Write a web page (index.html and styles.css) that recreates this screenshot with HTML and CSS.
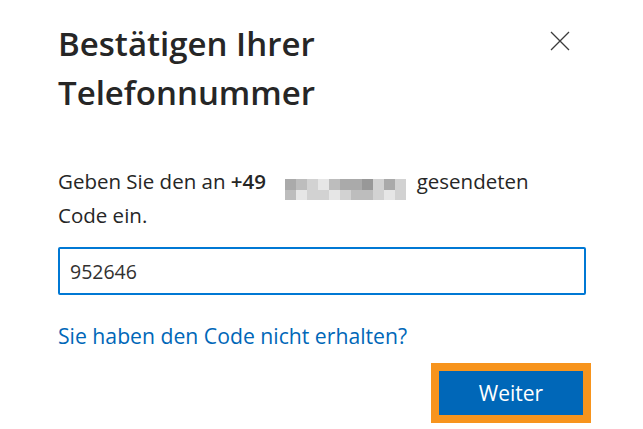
FILE: index.html
```html
<!DOCTYPE html>
<html lang="de">
<head>
<meta charset="utf-8">
<title>Bestätigen Ihrer Telefonnummer</title>
<link rel="stylesheet" href="styles.css">
</head>
<body>
<div class="dialog">
  <div class="header">
    <h1 class="title">Bestätigen Ihrer Telefonnummer</h1>
    <button class="close" aria-label="Schließen">
      <svg width="20" height="20" viewBox="0 0 20 20"><path d="M1 1 L19 19 M19 1 L1 19" stroke="#3b3b3b" stroke-width="1.3" fill="none"/></svg>
    </button>
  </div>
  <p class="desc">Geben Sie den an <b>+49</b> <span class="blur"><i class="a"></i><i class="b"></i><i class="c"></i><i class="w"></i><i class="b"></i><i class="a"></i><i class="a"></i><i class="d"></i><i class="c"></i><i class="a"></i><i class="c"></i><i class="b"></i><i class="w"></i><i class="c"></i><i class="c"></i><i class="w"></i><i class="c"></i><i class="b"></i><i class="b"></i><i class="c"></i><i class="w"></i><i class="c"></i></span> gesendeten Code ein.</p>
  <div class="field"><input class="input" type="text" value="952646"></div>
  <a class="link" href="#">Sie haben den Code nicht erhalten?</a>
  <div class="actions">
    <button class="primary">Weiter</button>
  </div>
</div>
</body>
</html>
```
FILE: styles.css
```css
html, body {
  margin: 0;
  padding: 0;
  background: #fff;
}
body {
  font-family: "Open Sans", "Noto Sans", sans-serif;
  color: #1b1b1b;
}
.dialog {
  width: 643px;
  height: 429px;
  box-sizing: border-box;
  padding: 19px 52px 0 58px;
  display: flex;
  flex-direction: column;
}
.header {
  display: flex;
  justify-content: space-between;
  align-items: flex-start;
}
.title {
  margin: 0;
  font-size: 33px;
  line-height: 49px;
  font-weight: 600;
  color: #262626;
  width: 330px;
}
.close {
  border: 0;
  background: none;
  padding: 0;
  margin: 12px 21px 0 0;
  width: 20px;
  height: 20px;
  display: flex;
}
.desc {
  margin: 49px 0 0;
  font-size: 20.5px;
  line-height: 30px;
  color: #262626;
  width: 500px;
}
.desc b {
  font-weight: 600;
}
.blur {
  display: inline-grid;
  grid-template-columns: repeat(11, 11px);
  grid-template-rows: 11px 10px;
  width: 121px;
  margin: 0 5px 0 14px;
  vertical-align: -1px;
}
.blur i { display: block; }
.blur .a { background: #aaaaaa; }
.blur .b { background: #bdbdbd; }
.blur .c { background: #d2d2d2; }
.blur .d { background: #989898; }
.blur .w { background: #e6e6e6; }
.field {
  margin-top: 17px;
}
.input {
  width: 528px;
  height: 48px;
  box-sizing: border-box;
  border: 2px solid #0078d4;
  border-radius: 2px;
  padding: 0 10px;
  font-family: "Open Sans", "Noto Sans", sans-serif;
  font-size: 19.5px;
  color: #323130;
  outline: none;
  display: block;
}
.link {
  margin-top: 26px;
  font-size: 21.2px;
  line-height: 30px;
  color: #0067b8;
  text-decoration: none;
  align-self: flex-start;
}
.actions {
  display: flex;
  justify-content: flex-end;
  margin-top: 20px;
}
.primary {
  width: 144px;
  height: 44px;
  background: #0067b8;
  color: #fff;
  border: 0;
  outline: 8px solid #f7941d;
  margin-right: 8px;
  font-family: "Open Sans", "Noto Sans", sans-serif;
  font-size: 21px;
}
```
